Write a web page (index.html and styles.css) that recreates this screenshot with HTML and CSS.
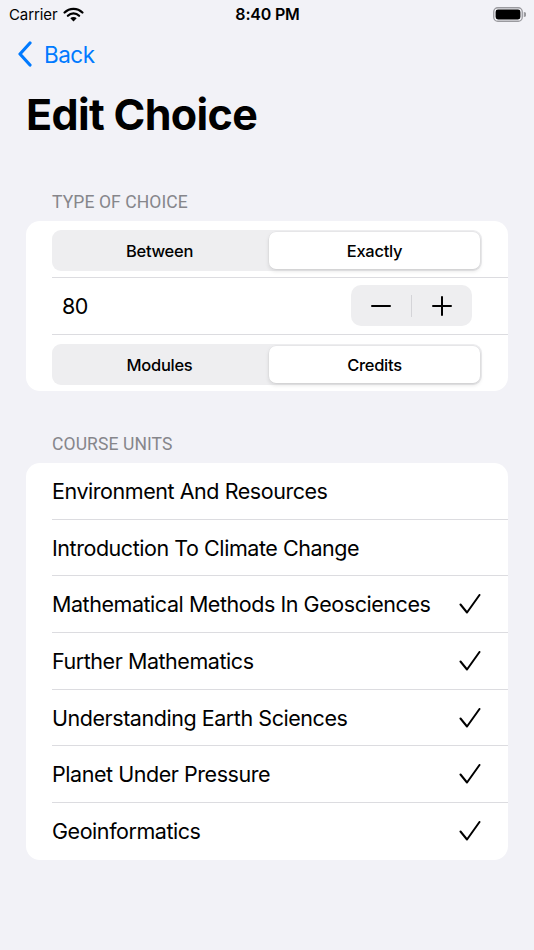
FILE: index.html
```html
<!DOCTYPE html>
<html>
<head>
<meta charset="utf-8">
<link rel="stylesheet" href="styles.css">
</head>
<body>
<div class="screen">
  <div class="statusbar">
    <div class="sb-left">
      <span class="carrier">Carrier</span>
      <svg class="wifi" width="21" height="15" viewBox="0 0 21 15">
        <path d="M10.5 14.5 L7.3 11.2 A4.6 4.6 0 0 1 13.7 11.2 Z" fill="#000"/>
        <path d="M4.9 8.8 A7.9 7.9 0 0 1 16.1 8.8" fill="none" stroke="#000" stroke-width="2.3" stroke-linecap="round"/>
        <path d="M1.6 5.5 A12.6 12.6 0 0 1 19.4 5.5" fill="none" stroke="#000" stroke-width="2.3" stroke-linecap="round"/>
      </svg>
    </div>
    <div class="time">8:40 PM</div>
    <div class="sb-right">
      <svg width="33" height="15" viewBox="0 0 33 15">
        <rect x="0.75" y="0.75" width="28.5" height="13.5" rx="4" fill="none" stroke="#9a9a9f" stroke-width="1.3"/>
        <rect x="2.6" y="2.6" width="24.8" height="9.8" rx="2.4" fill="#000"/>
        <path d="M30.8 5 A2.2 2.2 0 0 1 30.8 10 Z" fill="#9a9a9f"/>
      </svg>
    </div>
  </div>

  <div class="navbar">
    <div class="back">
      <svg width="16" height="26" viewBox="0 0 16 26">
        <path d="M13 2 L3 13 L13 24" fill="none" stroke="#007aff" stroke-width="3.2" stroke-linecap="round" stroke-linejoin="round"/>
      </svg>
      <span>Back</span>
    </div>
  </div>

  <h1 class="title">Edit Choice</h1>

  <div class="section-header first">TYPE OF CHOICE</div>
  <div class="card">
    <div class="row seg-row">
      <div class="segmented">
        <div class="seg">Between</div>
        <div class="seg selected">Exactly</div>
      </div>
    </div>
    <div class="row stepper-row">
      <span class="value">80</span>
      <div class="stepper">
        <div class="step-btn">
          <svg width="20" height="20" viewBox="0 0 20 20"><path d="M1 10 H19" stroke="#000" stroke-width="2" stroke-linecap="round"/></svg>
        </div>
        <div class="step-div"></div>
        <div class="step-btn">
          <svg width="20" height="20" viewBox="0 0 20 20"><path d="M1 10 H19 M10 1 V19" stroke="#000" stroke-width="2" stroke-linecap="round"/></svg>
        </div>
      </div>
    </div>
    <div class="row seg-row seg-row2 last">
      <div class="segmented">
        <div class="seg">Modules</div>
        <div class="seg selected">Credits</div>
      </div>
    </div>
  </div>

  <div class="section-header">COURSE UNITS</div>
  <div class="card list">
    <div class="row item"><span>Environment And Resources</span></div>
    <div class="row item"><span>Introduction To Climate Change</span></div>
    <div class="row item"><span>Mathematical Methods In Geosciences</span><svg class="check" width="22" height="20" viewBox="0 0 22 20"><path d="M1.5 10.5 L8 18.5 L20.5 1" fill="none" stroke="#000" stroke-width="2" stroke-linecap="round" stroke-linejoin="round"/></svg></div>
    <div class="row item"><span>Further Mathematics</span><svg class="check" width="22" height="20" viewBox="0 0 22 20"><path d="M1.5 10.5 L8 18.5 L20.5 1" fill="none" stroke="#000" stroke-width="2" stroke-linecap="round" stroke-linejoin="round"/></svg></div>
    <div class="row item"><span>Understanding Earth Sciences</span><svg class="check" width="22" height="20" viewBox="0 0 22 20"><path d="M1.5 10.5 L8 18.5 L20.5 1" fill="none" stroke="#000" stroke-width="2" stroke-linecap="round" stroke-linejoin="round"/></svg></div>
    <div class="row item"><span>Planet Under Pressure</span><svg class="check" width="22" height="20" viewBox="0 0 22 20"><path d="M1.5 10.5 L8 18.5 L20.5 1" fill="none" stroke="#000" stroke-width="2" stroke-linecap="round" stroke-linejoin="round"/></svg></div>
    <div class="row item last"><span>Geoinformatics</span><svg class="check" width="22" height="20" viewBox="0 0 22 20"><path d="M1.5 10.5 L8 18.5 L20.5 1" fill="none" stroke="#000" stroke-width="2" stroke-linecap="round" stroke-linejoin="round"/></svg></div>
  </div>
</div>
</body>
</html>
```

FILE: styles.css
```css
* { box-sizing: border-box; }
html, body {
  margin: 0;
  padding: 0;
  background: #f2f2f7;
}
body {
  font-family: Inter, "Liberation Sans", sans-serif;
  color: #000;
}
.screen {
  width: 534px;
  min-height: 950px;
  background: #f2f2f7;
}
.statusbar {
  height: 28px;
  display: flex;
  align-items: center;
  justify-content: space-between;
  padding: 0 8px 0 9px;
}
.sb-left {
  display: flex;
  align-items: center;
  gap: 6px;
  width: 120px;
}
.carrier {
  font-size: 15px;
  letter-spacing: -0.1px;
}
.time {
  font-size: 16px;
  font-weight: 600;
  letter-spacing: -0.2px;
}
.sb-right {
  width: 120px;
  display: flex;
  justify-content: flex-end;
}
.navbar {
  height: 52px;
  display: flex;
  align-items: center;
  padding-left: 17px;
}
.back {
  display: flex;
  align-items: center;
  gap: 11px;
  color: #007aff;
  font-size: 22.5px;
  letter-spacing: -0.5px;
}
.title {
  margin: 6px 0 0 26px;
  font-size: 43px;
  line-height: 57px;
  font-weight: 700;
  letter-spacing: -0.65px;
}
.section-header {
  margin: 42px 0 0 52px;
  font-family: Roboto, Inter, sans-serif;
  font-size: 17.5px;
  line-height: 22px;
  color: #86868b;
  letter-spacing: 0.1px;
}
.section-header.first {
  margin-top: 48px;
}
.card {
  margin: 8px 26px 0 26px;
  background: #fff;
  border-radius: 14px;
  overflow: hidden;
}
.row {
  margin-left: 26px;
  border-bottom: 1px solid #dcdce0;
  display: flex;
  align-items: center;
}
.row.last { border-bottom: none; }
.seg-row {
  height: 56.5px;
  padding-right: 26px;
  align-items: flex-start;
  padding-top: 9px;
}
.seg-row2 {
  padding-top: 9.5px;
}
.segmented {
  flex: 1;
  height: 41px;
  background: #eeeef0;
  border-radius: 9px;
  display: flex;
  gap: 4px;
  padding: 2px;
}
.seg {
  flex: 1;
  display: flex;
  align-items: center;
  justify-content: center;
  font-size: 16.5px;
  font-weight: 500;
  letter-spacing: -0.3px;
  border-radius: 7px;
}
.seg.selected {
  background: #fff;
  box-shadow: 0 2px 4px rgba(0,0,0,0.12), 0 0 0 0.5px rgba(0,0,0,0.04);
}
.stepper-row {
  height: 57px;
  justify-content: space-between;
  padding-right: 36px;
  padding-left: 10px;
}
.value {
  font-size: 21.5px;
  letter-spacing: -0.45px;
}
.stepper {
  width: 121px;
  height: 41px;
  background: #eeeef0;
  border-radius: 10px;
  display: flex;
  align-items: center;
}
.step-btn {
  flex: 1;
  display: flex;
  align-items: center;
  justify-content: center;
}
.step-div {
  width: 1px;
  height: 22px;
  background: #d4d4d8;
}
.item {
  height: 56.7px;
  justify-content: space-between;
  padding-right: 26px;
  font-size: 21.5px;
  letter-spacing: -0.45px;
}
.check {
  margin-right: 1px;
}
```
